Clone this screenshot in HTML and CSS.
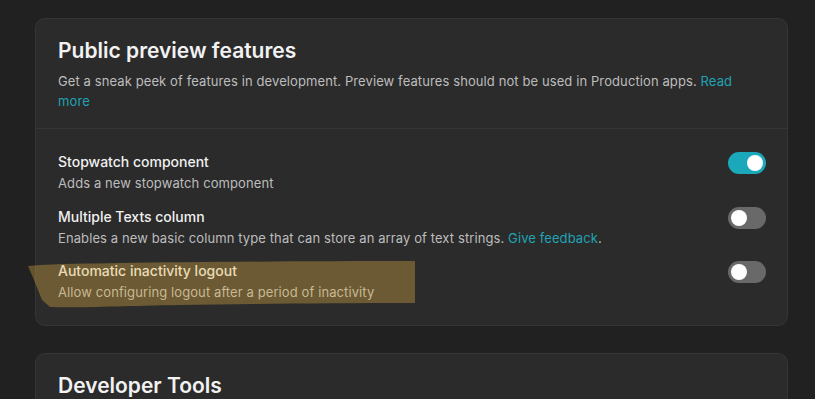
FILE: index.html
```html
<!DOCTYPE html>
<html lang="en">
<head>
  <meta charset="UTF-8" />
  <meta name="viewport" content="width=device-width, initial-scale=1" />
  <title>Settings - Preview features</title>
  <link rel="stylesheet" href="styles.css">
</head>
<body>
  <div class="page">
    <section class="card">
      <div class="card-header">
        <h2 class="card-title">Public preview features</h2>
        <p class="card-desc">Get a sneak peek of features in development. Preview features should not be used in Production apps. <a class="link" href="#">Read more</a></p>
      </div>

      <div class="feature-list">
        <div class="feature">
          <div class="feature-text">
            <div class="feature-name">Stopwatch component</div>
            <div class="feature-desc">Adds a new stopwatch component</div>
          </div>
          <button class="toggle on" aria-label="Stopwatch component"></button>
        </div>
        <div class="feature">
          <div class="feature-text">
            <div class="feature-name">Multiple Texts column</div>
            <div class="feature-desc">Enables a new basic column type that can store an array of text strings. <a class="link" href="#">Give feedback</a>.</div>
          </div>
          <button class="toggle" aria-label="Multiple Texts column"></button>
        </div>
        <div class="feature">
          <div class="feature-text">
            <div class="feature-name">Automatic inactivity logout</div>
            <div class="feature-desc">Allow configuring logout after a period of inactivity</div>
          </div>
          <button class="toggle" aria-label="Automatic inactivity logout"></button>
        </div>
      </div>
    </section>

    <section class="card">
      <div class="card-header">
        <h2 class="card-title">Developer Tools</h2>
      </div>
    </section>
  </div>

  <!-- marker annotation drawn over the screenshot -->
  <svg class="marker" width="815" height="399" viewBox="0 0 815 399">
    <path d="M28 266 C 60 263, 90 264, 120 263 C 200 262, 300 261, 415 261 L 415 303 C 330 303, 250 304, 180 305 C 120 306, 80 308, 50 307 L 42 300 L 38 290 L 34 280 Z" />
  </svg>
</body>
</html>
```

FILE: styles.css
```css
* {
  box-sizing: border-box;
}

body {
  margin: 0;
  background-color: #212121;
  font-family: Inter, "Noto Sans", sans-serif;
  color: #eee;
  overflow: hidden;
}

.page {
  width: 788px;
  padding: 18px 0 0 35px;
  display: flex;
  flex-direction: column;
  gap: 27px;
}

.card {
  background-color: #2b2b2b;
  border: 1px solid #353535;
  border-radius: 10px;
}

.card-header {
  padding: 18px 22px 17px;
  border-bottom: 1px solid #363636;
}

.card-title {
  margin: 0;
  font-size: 21px;
  line-height: 28px;
  font-weight: 600;
  color: #f2f2f2;
}

.card-desc {
  margin: 6px 0 0;
  padding-right: 30px;
  font-size: 13px;
  line-height: 20px;
  letter-spacing: 0.1px;
  color: #bdbdbd;
}

.link {
  color: #1fa3b4;
  text-decoration: none;
}

.feature-list {
  padding: 23px 21px 23px 22px;
  display: flex;
  flex-direction: column;
  gap: 13.5px;
}

.feature {
  display: flex;
  justify-content: space-between;
  align-items: flex-start;
}

.feature-name {
  font-size: 14px;
  line-height: 20px;
  font-weight: 500;
  color: #f0f0f0;
}

.feature-desc {
  margin-top: 1px;
  font-size: 13px;
  line-height: 20px;
  letter-spacing: 0.1px;
  color: #bdbdbd;
}

.toggle {
  position: relative;
  width: 38px;
  height: 22px;
  padding: 0;
  border: none;
  border-radius: 11px;
  background-color: #696969;
  cursor: pointer;
}

.toggle::after {
  content: "";
  position: absolute;
  top: 3px;
  left: 3px;
  width: 16px;
  height: 16px;
  border-radius: 50%;
  background-color: #fff;
}

.toggle.on {
  background-color: #1ba8bb;
}

.toggle.on::after {
  left: 19px;
}

.marker {
  position: absolute;
  top: 0;
  left: 0;
  pointer-events: none;
}

.marker path {
  fill: rgba(226, 177, 66, 0.35);
}
```
